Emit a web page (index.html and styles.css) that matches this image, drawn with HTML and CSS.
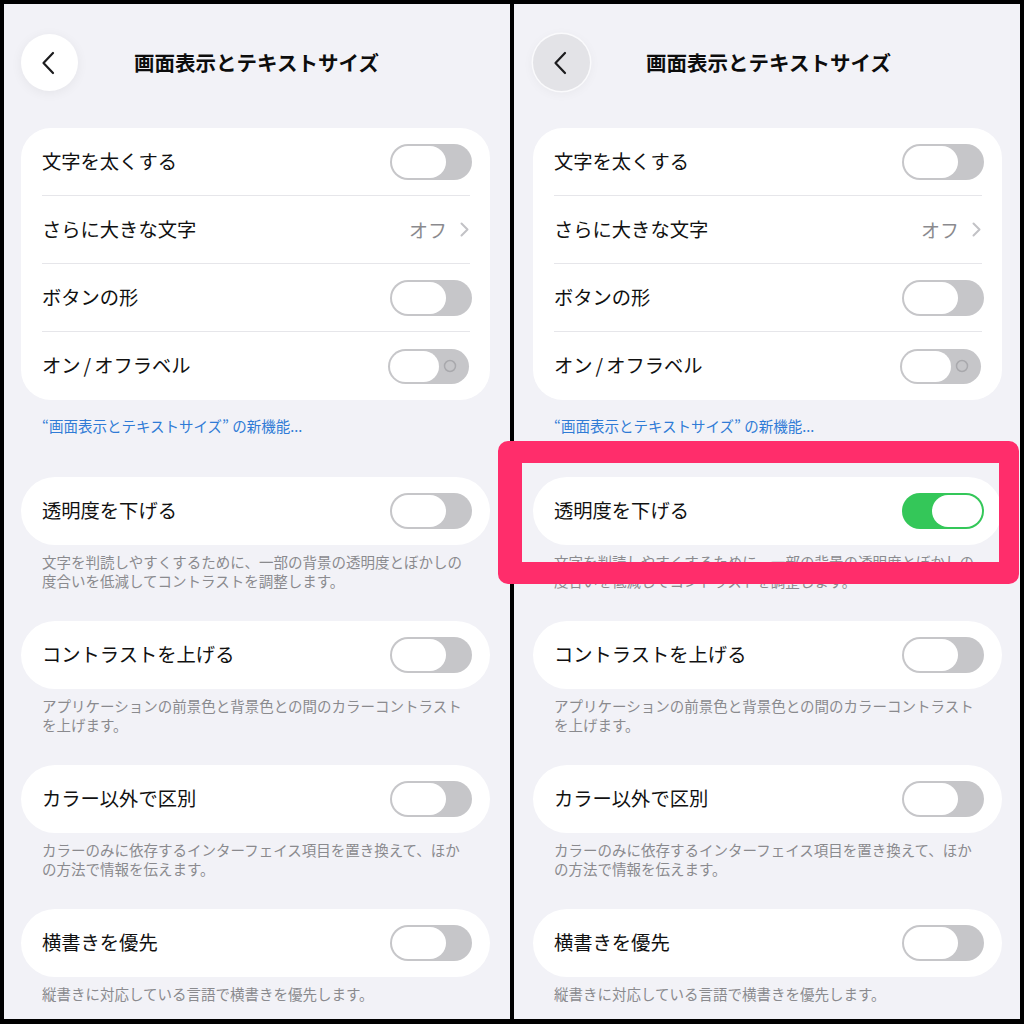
FILE: index.html
```html
<!DOCTYPE html>
<html lang="ja">
<head>
<meta charset="utf-8">
<title>画面表示とテキストサイズ</title>
<link rel="stylesheet" href="styles.css">
</head>
<body>
<div class="sheet">
  <section class="panel">
    <header class="nav">
      <button class="back" aria-label="戻る"><svg width="14" height="24" viewBox="0 0 14 24"><path d="M12 2 L2.5 12 L12 22" fill="none" stroke="#1c1c1e" stroke-width="2.2" stroke-linecap="round" stroke-linejoin="round"/></svg></button>
      <h1 class="title">画面表示とテキストサイズ</h1>
      <span></span>
    </header>

    <div class="card">
      <div class="row"><span class="label">文字を太くする</span><span class="toggle"><span class="knob"></span></span></div>
      <div class="sep"></div>
      <div class="row"><span class="label">さらに大きな文字</span><span class="detail">オフ<svg width="9" height="15" viewBox="0 0 9 15"><path d="M1.5 1.5 L7.5 7.5 L1.5 13.5" fill="none" stroke="#c2c2c6" stroke-width="2" stroke-linecap="round" stroke-linejoin="round"/></svg></span></div>
      <div class="sep"></div>
      <div class="row"><span class="label">ボタンの形</span><span class="toggle"><span class="knob"></span></span></div>
      <div class="sep"></div>
      <div class="row"><span class="label">オン<span class="slash">/</span>オフラベル</span><span class="toggle toggle-labels"><span class="knob"></span><svg class="ring" width="14" height="14" viewBox="0 0 14 14"><circle cx="7" cy="7" r="5.5" fill="none" stroke="#a9a9ad" stroke-width="1.5"/></svg></span></div>
    </div>
    <p class="link">“画面表示とテキストサイズ” の新機能...</p>

    <div class="group">
      <div class="card single"><div class="row"><span class="label">透明度を下げる</span><span class="toggle"><span class="knob"></span></span></div></div>
      <p class="footer">文字を判読しやすくするために、一部の背景の透明度とぼかしの<br>度合いを低減してコントラストを調整します。</p>
    </div>
    <div class="group">
      <div class="card single"><div class="row"><span class="label">コントラストを上げる</span><span class="toggle"><span class="knob"></span></span></div></div>
      <p class="footer">アプリケーションの前景色と背景色との間のカラーコントラスト<br>を上げます。</p>
    </div>
    <div class="group">
      <div class="card single"><div class="row"><span class="label">カラー以外で区別</span><span class="toggle"><span class="knob"></span></span></div></div>
      <p class="footer">カラーのみに依存するインターフェイス項目を置き換えて、ほか<br>の方法で情報を伝えます。</p>
    </div>
    <div class="group">
      <div class="card single"><div class="row"><span class="label">横書きを優先</span><span class="toggle"><span class="knob"></span></span></div></div>
      <p class="footer">縦書きに対応している言語で横書きを優先します。</p>
    </div>
  </section>

  <section class="panel panel-right">
    <header class="nav">
      <button class="back pressed" aria-label="戻る"><svg width="14" height="24" viewBox="0 0 14 24"><path d="M12 2 L2.5 12 L12 22" fill="none" stroke="#1c1c1e" stroke-width="2.2" stroke-linecap="round" stroke-linejoin="round"/></svg></button>
      <h1 class="title">画面表示とテキストサイズ</h1>
      <span></span>
    </header>

    <div class="card">
      <div class="row"><span class="label">文字を太くする</span><span class="toggle"><span class="knob"></span></span></div>
      <div class="sep"></div>
      <div class="row"><span class="label">さらに大きな文字</span><span class="detail">オフ<svg width="9" height="15" viewBox="0 0 9 15"><path d="M1.5 1.5 L7.5 7.5 L1.5 13.5" fill="none" stroke="#c2c2c6" stroke-width="2" stroke-linecap="round" stroke-linejoin="round"/></svg></span></div>
      <div class="sep"></div>
      <div class="row"><span class="label">ボタンの形</span><span class="toggle"><span class="knob"></span></span></div>
      <div class="sep"></div>
      <div class="row"><span class="label">オン<span class="slash">/</span>オフラベル</span><span class="toggle toggle-labels"><span class="knob"></span><svg class="ring" width="14" height="14" viewBox="0 0 14 14"><circle cx="7" cy="7" r="5.5" fill="none" stroke="#a9a9ad" stroke-width="1.5"/></svg></span></div>
    </div>
    <p class="link">“画面表示とテキストサイズ” の新機能...</p>

    <div class="group">
      <div class="card single"><div class="row"><span class="label">透明度を下げる</span><span class="toggle on"><span class="knob"></span></span></div></div>
      <p class="footer">文字を判読しやすくするために、一部の背景の透明度とぼかしの<br>度合いを低減してコントラストを調整します。</p>
    </div>
    <div class="group">
      <div class="card single"><div class="row"><span class="label">コントラストを上げる</span><span class="toggle"><span class="knob"></span></span></div></div>
      <p class="footer">アプリケーションの前景色と背景色との間のカラーコントラスト<br>を上げます。</p>
    </div>
    <div class="group">
      <div class="card single"><div class="row"><span class="label">カラー以外で区別</span><span class="toggle"><span class="knob"></span></span></div></div>
      <p class="footer">カラーのみに依存するインターフェイス項目を置き換えて、ほか<br>の方法で情報を伝えます。</p>
    </div>
    <div class="group">
      <div class="card single"><div class="row"><span class="label">横書きを優先</span><span class="toggle"><span class="knob"></span></span></div></div>
      <p class="footer">縦書きに対応している言語で横書きを優先します。</p>
    </div>
  </section>

  <div class="highlight"></div>
</div>
</body>
</html>
```

FILE: styles.css
```css
* { box-sizing: border-box; }

html, body {
  margin: 0;
  padding: 0;
  background: #000;
}

body {
  font-family: "Noto Sans CJK JP", "Noto Sans", sans-serif;
  color: #111;
  width: 1024px;
  height: 1024px;
  overflow: hidden;
}

.sheet {
  position: relative;
  display: flex;
  gap: 4px;
  padding: 4px 0 0 4px;
  height: 1024px;
}

.panel {
  width: 506px;
  height: 1015px;
  background: #f2f2f7;
  overflow: hidden;
  padding: 30px 20px 0 17px;
  display: flex;
  flex-direction: column;
}

.panel-right {
  padding-left: 19px;
  padding-right: 18px;
}

.nav {
  display: grid;
  grid-template-columns: 57px 1fr 57px;
  align-items: center;
  height: 57px;
  margin-bottom: 37px;
}

.back {
  width: 57px;
  height: 57px;
  border-radius: 50%;
  border: none;
  background: #fff;
  box-shadow: 0 2px 12px rgba(0, 0, 0, 0.06);
  display: flex;
  align-items: center;
  justify-content: center;
  padding: 0 3px 0 0;
}

.back.pressed {
  background: #e3e3e7;
  box-shadow: 0 0 0 1.5px #fafafc, 0 2px 12px rgba(0, 0, 0, 0.05);
}

.title {
  margin: 0;
  text-align: center;
  font-size: 20.5px;
  font-weight: 700;
  color: #0d0d0d;
  line-height: 1;
  padding-left: 2px;
}

.card {
  background: #fff;
  border-radius: 30px;
}

.card.single {
  border-radius: 34px;
}

.row {
  height: 67px;
  display: flex;
  align-items: center;
  justify-content: space-between;
  padding: 0 18px 0 21px;
}

.card .row:last-child {
  height: 68px;
}

.label {
  font-size: 19.3px;
  color: #111;
  line-height: 1;
}

.slash {
  margin: 0 3px;
}

.sep {
  height: 1px;
  background: #e6e6ea;
  margin: 0 20px 0 21px;
}

.detail {
  display: flex;
  align-items: center;
  gap: 13px;
  font-size: 19px;
  color: #8a8a8e;
  padding-right: 3px;
}

.toggle {
  position: relative;
  width: 82px;
  height: 36px;
  border-radius: 18px;
  background: #c6c6c9;
  flex: none;
}

.knob {
  position: absolute;
  left: 2px;
  top: 2px;
  width: 54px;
  height: 32px;
  border-radius: 16px;
  background: #fff;
}

.toggle.on {
  background: #34c759;
}

.toggle.on .knob {
  left: auto;
  right: 2px;
  width: 50px;
}

.toggle-labels {
  width: 81px;
  height: 35px;
  margin-right: 3px;
}

.toggle-labels .knob {
  width: 49px;
  height: 31px;
}

.ring {
  position: absolute;
  right: 12px;
  top: 10.5px;
}

.link {
  margin: 17px 0 0 21px;
  font-size: 14.5px;
  line-height: 18px;
  color: #2f7bd6;
}

.group {
  margin-top: 42px;
}

.group + .group {
  margin-top: 31px;
}

.footer {
  margin: 7px 0 0 21px;
  font-size: 14.5px;
  line-height: 19px;
  color: #8a8a8e;
  white-space: nowrap;
}

.highlight {
  position: absolute;
  left: 498px;
  top: 441px;
  width: 521px;
  height: 143px;
  border-style: solid;
  border-color: #ff2d6b;
  border-width: 22px 20px 22px 24px;
  border-radius: 10px;
  pointer-events: none;
}
```
